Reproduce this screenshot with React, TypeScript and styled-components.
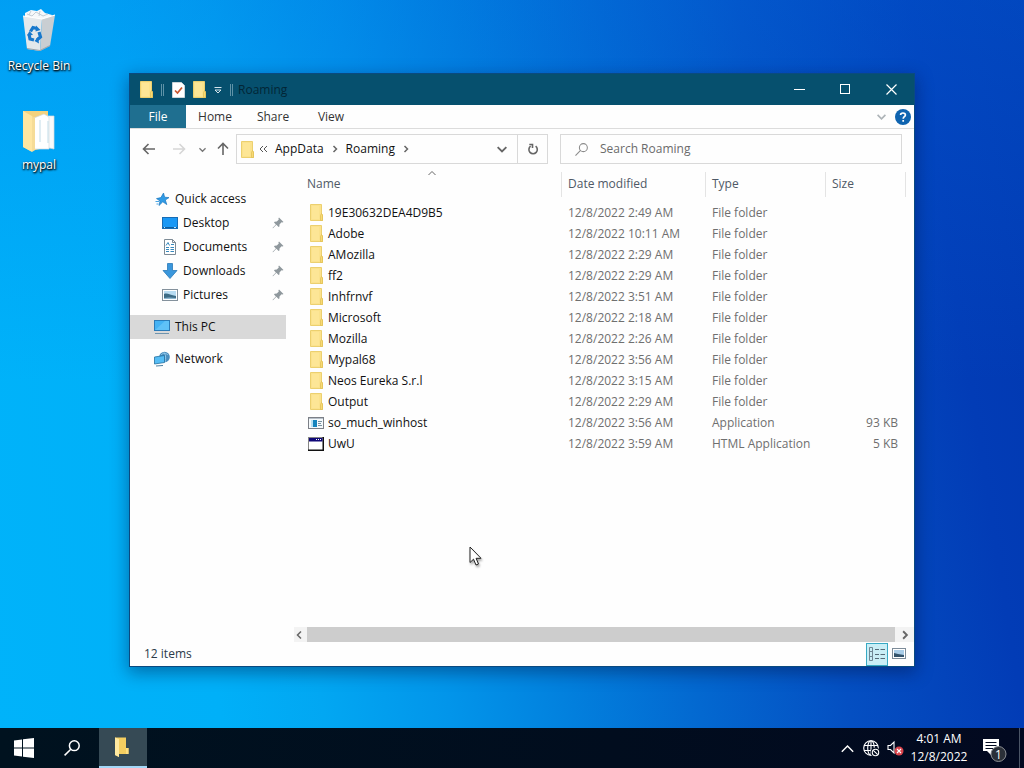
import React from "react";
import styled, { createGlobalStyle } from "styled-components";

const GlobalStyle = createGlobalStyle`
  * { box-sizing: border-box; }
  html, body, #root { height: 100%; }
  body {
    margin: 0;
    overflow: hidden;
    font-family: "Open Sans", "Noto Sans", sans-serif;
    font-size: 12px;
    line-height: 16px;
    color: #111;
  }
  button, input { font: inherit; color: inherit; }
  button { border: 0; padding: 0; background: none; }
  svg { display: block; flex: none; }
`;

const Screen = styled.div`
  display: flex;
  flex-direction: column;
  height: 100%;
  background:
    linear-gradient(180deg, rgba(0, 110, 230, 0.28), rgba(0, 110, 230, 0) 50%),
    linear-gradient(81deg, #00b3fa 0%, #00b0f8 20%, #02a7f2 29%, #0295ea 40%, #0281de 50%, #0368d0 62%, #044fc2 75%, #023cb6 90%, #0238b0 100%);
`;

const Desktop = styled.main`
  position: relative;
  flex: 1;
  min-height: 0;
  padding-top: 8px;
`;

const Shortcuts = styled.nav`
  display: flex;
  flex-direction: column;
  gap: 33px;
  width: 78px;
`;

const Shortcut = styled.a`
  display: flex;
  flex-direction: column;
  align-items: center;
  gap: 2px;
  color: #fff;
  text-decoration: none;
  text-shadow: 0 1px 2px #000, 1px 1px 2px #000;
`;

const Window = styled.section`
  position: absolute;
  inset: 74px 110px 62px 130px;
  display: flex;
  flex-direction: column;
  background: #fefefe;
  box-shadow: 0 0 0 1px #0a4a80, 0 5px 16px 2px rgba(0, 15, 60, 0.4);
`;

const TitleBar = styled.header`
  display: flex;
  align-items: center;
  height: 31px;
  padding-left: 10px;
  background: #06506e;
`;

const QuickTools = styled.div`
  display: flex;
  align-items: center;
  gap: 8px;
  flex: 1;
`;

const Divider = styled.span`
  width: 3px;
  height: 12px;
  border: solid #5f93a8;
  border-width: 0 1px;
`;

const Title = styled.h1`
  margin: 0 0 0 -3px;
  font-size: 12px;
  font-weight: 400;
  color: #022636;
`;

const Caption = styled.button`
  display: grid;
  place-items: center;
  width: 46px;
  height: 31px;
`;

const Ribbon = styled.nav`
  display: flex;
  align-items: stretch;
  height: 24px;
  padding-right: 3px;
  border-bottom: 1px solid #dcdcdc;
`;

const RibbonTab = styled.button<{ $file?: boolean }>`
  width: ${(p) => (p.$file ? 56 : 58)}px;
  color: ${(p) => (p.$file ? "#fff" : "#333")};
  background: ${(p) => (p.$file ? "#1f6f90" : "transparent")};
`;

const RibbonEnd = styled.div`
  display: flex;
  align-items: center;
  gap: 9px;
  margin-left: auto;
`;

const NavRow = styled.div`
  display: flex;
  align-items: center;
  height: 40px;
  padding: 0 12px;
`;

const NavButtons = styled.div`
  display: flex;
  align-items: center;
  gap: 16px;
  width: 94px;
`;

const RecentUp = styled.div`
  display: flex;
  align-items: center;
  gap: 10px;
  margin-left: -3px;
`;

const AddressBar = styled.div`
  display: flex;
  align-items: center;
  flex: 312 1 312px;
  min-width: 0;
  height: 30px;
  padding-left: 4px;
  border: 1px solid #d9d9d9;
`;

const CrumbMore = styled.button`
  margin-left: 5px;
`;

const Crumb = styled.button`
  padding: 0 7px;
  color: #111;
`;

const AddressEnd = styled.div`
  display: flex;
  margin-left: auto;
  height: 100%;
`;

const AddressButton = styled.button<{ $line?: boolean }>`
  display: grid;
  place-items: center;
  width: 30px;
  border-left: ${(p) => (p.$line ? "1px solid #d9d9d9" : "0")};
`;

const SearchBox = styled.label`
  display: flex;
  align-items: center;
  gap: 12px;
  flex: 342 1 342px;
  min-width: 0;
  height: 30px;
  margin-left: 12px;
  padding-left: 14px;
  border: 1px solid #d9d9d9;
`;

const SearchInput = styled.input`
  flex: 1;
  min-width: 0;
  padding: 0;
  border: 0;
  outline: 0;
  background: none;
  &::placeholder { color: #6b6b6b; opacity: 1; }
`;

const Body = styled.div`
  display: flex;
  flex: 1;
  min-height: 0;
`;

const Sidebar = styled.nav`
  display: flex;
  flex-direction: column;
  gap: 8px;
  width: 156px;
  margin-right: 8px;
  padding-top: 18px;
`;

const SideGroup = styled.div`
  display: flex;
  flex-direction: column;
`;

const SideItem = styled.a<{ $nested?: boolean; $active?: boolean }>`
  display: flex;
  align-items: center;
  gap: 5px;
  height: 24px;
  padding: 0 2px 0 ${(p) => (p.$nested ? 32 : 24)}px;
  color: #111;
  text-decoration: none;
  background: ${(p) => (p.$active ? "#d9d9d9" : "transparent")};
`;

const SideLabel = styled.span`
  flex: 1;
  white-space: nowrap;
`;

const FilePane = styled.div`
  display: flex;
  flex-direction: column;
  flex: 1;
  min-width: 0;
`;

const FileScroll = styled.div`
  flex: 1;
  min-height: 0;
  overflow: hidden;
`;

const FileTable = styled.table`
  width: 100%;
  table-layout: fixed;
  border-collapse: separate;
  border-spacing: 0;
`;

const Col = styled.col<{ $w?: number }>`
  width: ${(p) => (p.$w ? `${p.$w}px` : "auto")};
`;

const HeadCell = styled.th<{ $first?: boolean }>`
  position: relative;
  height: 33px;
  padding: 0 0 3px ${(p) => (p.$first ? 13 : 7)}px;
  font-weight: 400;
  text-align: left;
  color: #4f5966;
  background: ${(p) => (p.$first ? "none" : "linear-gradient(#e4e4e4, #e4e4e4) 0 3px / 1px 25px no-repeat")};
`;

const SortMark = styled.span`
  position: absolute;
  top: 0;
  left: 50%;
`;

const Cell = styled.td<{ $right?: boolean }>`
  height: 21px;
  padding: 0 ${(p) => (p.$right ? 7 : 0)}px 0 7px;
  white-space: nowrap;
  text-align: ${(p) => (p.$right ? "right" : "left")};
  color: #6f6f6f;
`;

const NameCell = styled(Cell)`
  padding-left: 14px;
  color: #111;
`;

const FileName = styled.span`
  display: flex;
  align-items: center;
  gap: 4px;
`;

const ScrollBar = styled.div`
  display: flex;
  height: 15px;
  background: #f3f3f3;
`;

const ScrollArrow = styled.button`
  display: grid;
  place-items: center;
  width: 19px;
  &:first-child { width: 13px; padding-right: 4px; }
`;

const ScrollThumb = styled.div`
  flex: 1;
  background: #cdcdcd;
`;

const StatusBar = styled.footer`
  display: flex;
  align-items: center;
  height: 24px;
  padding: 0 4px 0 14px;
  color: #2b3a4a;
`;

const ViewButtons = styled.div`
  display: flex;
  margin-left: auto;
`;

const ViewButton = styled.button<{ $on?: boolean }>`
  display: grid;
  place-items: center;
  width: 22px;
  height: 23px;
  border: 1px solid ${(p) => (p.$on ? "#38a9c4" : "transparent")};
  background: ${(p) => (p.$on ? "#c9eef6" : "transparent")};
`;

const Pointer = styled.div`
  position: absolute;
  left: 469px;
  top: 546px;
  filter: drop-shadow(1px 2px 1px rgba(0, 0, 0, 0.35));
`;

const Taskbar = styled.footer`
  display: flex;
  height: 40px;
  background: linear-gradient(90deg, #00121f, #010d1e 60%, #020920);
  color: #fff;
`;

const TaskButton = styled.button<{ $open?: boolean }>`
  display: grid;
  place-items: center;
  width: 48px;
  margin-left: ${(p) => (p.$open ? 3 : 0)}px;
  background: ${(p) => (p.$open ? "#364a55" : "transparent")};
  border-bottom: ${(p) => (p.$open ? "2px solid #a3d8f8" : "0")};
`;

const Tray = styled.div`
  display: flex;
  align-items: center;
  margin-left: auto;
`;

const TrayButton = styled.button<{ $wide?: boolean }>`
  display: grid;
  place-items: center;
  width: ${(p) => (p.$wide ? 48 : 24)}px;
  height: 40px;
`;

const Clock = styled.time`
  display: flex;
  flex-direction: column;
  align-items: center;
  width: 64px;
  line-height: 18px;
`;

const ShowDesktop = styled.button`
  width: 5px;
  height: 40px;
  border-left: 1px solid #4b5566;
`;

const Folder = () => (
  <svg width="13" height="17" viewBox="0 0 13 17" aria-hidden="true">
    <path d="M0.5 0.5H11.5V10L12.5 11V16.5H0.5Z" fill="#fbe28c" stroke="#ecd06f" />
    <path d="M2 2H9V15H2Z" fill="#ffe99f" opacity="0.55" />
    <path d="M10.500 16V11.5L11.5 9.5L12.5 11V16.5H10.500Z" fill="#f8da74" stroke="#e0be55" strokeWidth="0.7" />
  </svg>
);

const Chevron = ({ dir, size = 8, color = "#666", weight = 1.5 }: { dir: "up" | "down" | "left" | "right"; size?: number; color?: string; weight?: number }) => {
  const d = {
    up: "M0.5 6L4 2.5L7.5 6",
    down: "M0.5 2.5L4 6L7.5 2.5",
    left: "M6 0.5L2.5 4L6 7.5",
    right: "M2.5 1L5.5 4L2.5 7",
  }[dir];
  return (
    <svg width={size} height={size} viewBox="0 0 8 8" fill="none" stroke={color} strokeWidth={weight} aria-hidden="true">
      <path d={d} />
    </svg>
  );
};

const Arrow = ({ color, turn = 0 }: { color: string; turn?: number }) => (
  <svg width="14" height="14" viewBox="0 0 14 14" fill="none" stroke={color} strokeWidth="1.6" aria-hidden="true">
    <path d="M13 7H1.5M6.5 2L1.5 7L6.5 12" transform={`rotate(${turn} 7 7)`} />
  </svg>
);

const Magnifier = ({ size, color, weight }: { size: number; color: string; weight: number }) => (
  <svg width={size} height={size} viewBox="0 0 16 16" fill="none" stroke={color} strokeWidth={weight} aria-hidden="true">
    <circle cx="10.3" cy="5.7" r="4.9" />
    <path d="M6.8 9.2L0.6 15.4" />
  </svg>
);

const Pin = () => (
  <svg width="12" height="12" viewBox="0 0 12 12" fill="#8f989d" aria-hidden="true">
    <path d="M7 0.5L11.5 5L10.5 5.5L9.5 5.3L7.5 7.5L7.4 9.5L6.6 10L4.4 7.8L1 11.3L0.5 11L3.9 7.4L2 5.4L2.6 4.7L4.8 4.5L6.8 2.5L6.4 1.4Z" />
  </svg>
);

const Star = () => (
  <svg width="16" height="16" viewBox="0 0 16 16" aria-hidden="true">
    <path d="M9.5 2L10.6 6.200L15 6.600L11.3 9L12.800 13.6L8.8 10.8L5 14.5L6 9.9L2.500 7.6L6.9 6.600Z" fill="#2f9be6" stroke="#1b76bd" strokeWidth="0.7" />
    <path d="M1.500 10.5H5M2.500 13H4.5" stroke="#4ba6e4" />
  </svg>
);

const DesktopIcon = () => (
  <svg width="16" height="16" viewBox="0 0 16 16" aria-hidden="true">
    <rect x="0.5" y="2.5" width="15" height="11" fill="#1a98f5" stroke="#176cb5" />
    <path d="M1 12.5H15" stroke="#0d5e9e" />
    <path d="M2 12.5H3M12 12.5H14" stroke="#bfe3fb" />
  </svg>
);

const DocumentIcon = () => (
  <svg width="16" height="16" viewBox="0 0 16 16" aria-hidden="true">
    <path d="M2.5 0.5H10.5L13.5 3.5V15.5H2.5Z" fill="#fff" stroke="#7d8b96" />
    <path d="M10.5 0.5V3.5H13.5" fill="none" stroke="#7d8b96" />
    <path d="M4 6.5L6 3.5L7.5 6.5M9 5.5H12M4 8.5H7M8.5 8.5H12M4 10.5H7M8.5 10.5H12M4 12.5H7M8.5 12.5H12" fill="none" stroke="#3889bd" />
  </svg>
);

const DownloadIcon = () => (
  <svg width="16" height="16" viewBox="0 0 16 16" aria-hidden="true">
    <path d="M5.5 0.5H10.5V7.5H15L8 15.5L1 7.5H5.5Z" fill="#3a97dc" stroke="#2879b8" strokeWidth="0.8" />
  </svg>
);

const PictureIcon = () => (
  <svg width="16" height="16" viewBox="0 0 16 16" aria-hidden="true">
    <rect x="0.5" y="2.5" width="15" height="11" fill="#fff" stroke="#84919c" />
    <rect x="2" y="4" width="12" height="8" fill="#b8dcf2" />
    <path d="M2 7C5 5.500 8 8 14 9V12H2Z" fill="#3d6c86" />
    <path d="M2 11C6 10 10 10.500 14 11V12H2Z" fill="#8fb7d0" />
  </svg>
);

const PcIcon = () => (
  <svg width="16" height="16" viewBox="0 0 16 16" aria-hidden="true">
    <rect x="0.5" y="1.500" width="15" height="10" fill="#44b2f4" stroke="#2b7bb8" />
    <path d="M1 11L11 2H15V11Z" fill="#72cbfa" opacity="0.6" />
    <path d="M1 14.500H15" stroke="#6f94ae" />
  </svg>
);

const NetworkIcon = () => (
  <svg width="16" height="16" viewBox="0 0 16 16" aria-hidden="true">
    <circle cx="10.500" cy="6" r="5.300" fill="#4a8dbd" />
    <path d="M7 4C9 1.500 12 2 14 4M10 1.500C12 4 12 8 11 11" fill="none" stroke="#93c8ea" />
    <path d="M0.500 6L10.500 4.500V11.500L0.500 13Z" fill="#56bdf5" stroke="#23709f" strokeWidth="0.8" />
    <path d="M2 15L9 14.500" stroke="#4d7f9f" />
  </svg>
);

const AppIcon = () => (
  <svg width="16" height="16" viewBox="0 0 16 16" aria-hidden="true">
    <rect x="0.500" y="2.500" width="15" height="11" fill="#f5f9fb" stroke="#7c8087" />
    <path d="M1 3.500H15" stroke="#b7c0c9" />
    <rect x="5" y="5" width="4" height="7" fill="#1684bd" />
    <rect x="3" y="5" width="2" height="7" fill="#b8e1f3" />
    <path d="M10 6.500H14M10 8.500H13M10 10.500H14" stroke="#7891a0" />
  </svg>
);

const HtaIcon = () => (
  <svg width="16" height="16" viewBox="0 0 16 16" aria-hidden="true">
    <rect x="0.500" y="1.500" width="15" height="13" fill="#fff" stroke="#858585" />
    <path d="M0 14.250H15.250V1" fill="none" stroke="#111" strokeWidth="1.500" />
    <rect x="1" y="2" width="13.500" height="3.500" fill="#100878" />
    <path d="M8 3.500H9M10 3.500H11M12 3.500H13" stroke="#fff" />
  </svg>
);

const RecycleBin = () => (
  <svg width="48" height="48" viewBox="0 0 48 48" aria-hidden="true">
    <g transform="translate(-3 0)">
      <path d="M13 5L19 2L25 3L29 1L33 5L40 7L38 12H13Z" fill="#f6f8fa" />
      <path d="M15 6L20 8L24 4L31 8L36 6M19 3L17 7M28 3L27 8" fill="none" stroke="#c3ccd4" />
      <path d="M11 8L30 11L28 43L15 41Z" fill="#e4e8eb" />
      <path d="M30 11L43 7L38 38L28 43Z" fill="#c9ced2" />
      <path d="M11 8L30 11L43 7" fill="none" stroke="#fff" strokeWidth="1.200" />
      <path d="M15 40.500L28 42.500L38 37.500" fill="none" stroke="#9ba2a8" />
      <g fill="none" stroke="#1878cc" strokeWidth="3.200">
        <path d="M18.500 23.500L21 19.500L25 20.500" />
        <path d="M17 26L18 31L22 32" />
        <path d="M27 24L28.500 29L25 32" />
      </g>
      <path d="M24 17.500L28.500 22L23.500 23.500Z" fill="#1878cc" />
      <path d="M15 27.500L17.500 23L21 27Z" fill="#1878cc" />
      <path d="M26 29L22.500 33L27 35.500Z" fill="#1878cc" />
    </g>
  </svg>
);

const OpenFolder = () => (
  <svg width="48" height="48" viewBox="0 0 48 48" aria-hidden="true">
    <path d="M8 4L33 4V40L16 44L8 40Z" fill="#f3d27e" />
    <path d="M30 9H39V42L30 40Z" fill="#f8fafb" stroke="#d5dade" strokeWidth="0.700" />
    <path d="M19 11L29 7L34 10V42L19 42Z" fill="#fff" stroke="#d5dade" strokeWidth="0.700" />
    <path d="M25 13V35M33 14V36" stroke="#c2dce8" />
    <path d="M8 4L17 9V45L8 40Z" fill="#ffe6a1" />
    <path d="M17 9L20 11V43L17 45Z" fill="#f6dc97" />
  </svg>
);

const PropertiesIcon = () => (
  <svg width="13" height="16" viewBox="0 0 13 16" aria-hidden="true">
    <path d="M0.500 0.500H9.500L12.500 3.500V15.500H0.500Z" fill="#fff" stroke="#cbd5da" />
    <path d="M3 8.500L5.500 11L10 5.500" fill="none" stroke="#c9552f" strokeWidth="1.700" />
  </svg>
);

type Entry = { name: string; date: string; type: string; size?: string; icon: React.ReactNode };

const folder = (name: string, time: string): Entry => ({
  name,
  date: `12/8/2022 ${time}`,
  type: "File folder",
  icon: <Folder />,
});

const entries: Entry[] = [
  folder("19E30632DEA4D9B5", "2:49 AM"),
  folder("Adobe", "10:11 AM"),
  folder("AMozilla", "2:29 AM"),
  folder("ff2", "2:29 AM"),
  folder("Inhfrnvf", "3:51 AM"),
  folder("Microsoft", "2:18 AM"),
  folder("Mozilla", "2:26 AM"),
  folder("Mypal68", "3:56 AM"),
  folder("Neos Eureka S.r.l", "3:15 AM"),
  folder("Output", "2:29 AM"),
  { name: "so_much_winhost", date: "12/8/2022 3:56 AM", type: "Application", size: "93 KB", icon: <AppIcon /> },
  { name: "UwU", date: "12/8/2022 3:59 AM", type: "HTML Application", size: "5 KB", icon: <HtaIcon /> },
];

const IconSlot = styled.span`
  display: grid;
  place-items: center;
  width: 16px;
`;

const pinned = [
  { label: "Desktop", icon: <DesktopIcon /> },
  { label: "Documents", icon: <DocumentIcon /> },
  { label: "Downloads", icon: <DownloadIcon /> },
  { label: "Pictures", icon: <PictureIcon /> },
];

function Explorer() {
  return (
    <Window aria-label="Roaming">
      <TitleBar>
        <QuickTools>
          <Folder />
          <Divider />
          <PropertiesIcon />
          <Folder />
          <svg width="8" height="8" viewBox="0 0 8 8" fill="none" stroke="#d5e5ec" aria-hidden="true">
            <path d="M0.500 1.500H7.500M1 4L4 7L7 4Z" />
          </svg>
          <Divider />
          <Title>Roaming</Title>
        </QuickTools>
        <Caption aria-label="Minimize">
          <svg width="11" height="11" viewBox="0 0 11 11" stroke="#fff"><path d="M0 5.500H11" /></svg>
        </Caption>
        <Caption aria-label="Maximize">
          <svg width="11" height="11" viewBox="0 0 11 11" stroke="#fff" fill="none"><rect x="0.500" y="0.500" width="9" height="9" /></svg>
        </Caption>
        <Caption aria-label="Close">
          <svg width="11" height="11" viewBox="0 0 11 11" stroke="#fff" strokeWidth="1.200"><path d="M0.500 0.500L10.500 10.500M10.500 0.500L0.500 10.500" /></svg>
        </Caption>
      </TitleBar>

      <Ribbon>
        <RibbonTab $file>File</RibbonTab>
        <RibbonTab>Home</RibbonTab>
        <RibbonTab>Share</RibbonTab>
        <RibbonTab>View</RibbonTab>
        <RibbonEnd>
          <button aria-label="Expand the ribbon"><Chevron dir="down" size={9} color="#aeb4b8" /></button>
          <button aria-label="Help">
            <svg width="16" height="16" viewBox="0 0 16 16" fill="none">
              <circle cx="8" cy="8" r="8" fill="#0f64b0" />
              <path d="M5.600 6C5.600 3.400 10.400 3.300 10.400 6C10.400 7.700 8.200 7.800 8.200 9.800M8.200 11V12.800" stroke="#fff" strokeWidth="1.700" />
            </svg>
          </button>
        </RibbonEnd>
      </Ribbon>

      <NavRow>
        <NavButtons>
          <button aria-label="Back"><Arrow color="#666" /></button>
          <button aria-label="Forward"><Arrow color="#d6d6d6" turn={180} /></button>
          <RecentUp>
            <button aria-label="Recent locations"><Chevron dir="down" size={7} color="#777" /></button>
            <button aria-label="Up"><Arrow color="#666" turn={90} /></button>
          </RecentUp>
        </NavButtons>
        <AddressBar>
          <Folder />
          <CrumbMore aria-label="Parent folders">
            <svg width="9" height="8" viewBox="0 0 9 8" fill="none" stroke="#555">
              <path d="M4 1L1 4L4 7M8 1L5 4L8 7" />
            </svg>
          </CrumbMore>
          <Crumb>AppData</Crumb>
          <Chevron dir="right" />
          <Crumb>Roaming</Crumb>
          <Chevron dir="right" />
          <AddressEnd>
            <AddressButton aria-label="Previous locations"><Chevron dir="down" size={10} /></AddressButton>
            <AddressButton $line aria-label="Refresh">
              <svg width="12" height="12" viewBox="0 0 12 12" fill="none" stroke="#666" strokeWidth="1.600">
                <path d="M8.600 3.200A4.200 4.200 0 1 1 3.600 3.200" />
                <path d="M2.300 1.500H5.500V5" />
              </svg>
            </AddressButton>
          </AddressEnd>
        </AddressBar>
        <SearchBox>
          <Magnifier size={13} color="#8b8b8b" weight={1.3} />
          <SearchInput type="text" placeholder="Search Roaming" aria-label="Search Roaming" />
        </SearchBox>
      </NavRow>

      <Body>
        <Sidebar>
          <SideGroup>
            <SideItem href="#quick"><Star /><SideLabel>Quick access</SideLabel></SideItem>
            {pinned.map((p) => (
              <SideItem key={p.label} href={`#${p.label}`} $nested>
                {p.icon}
                <SideLabel>{p.label}</SideLabel>
                <Pin />
              </SideItem>
            ))}
          </SideGroup>
          <SideItem href="#pc" $active><PcIcon /><SideLabel>This PC</SideLabel></SideItem>
          <SideItem href="#network"><NetworkIcon /><SideLabel>Network</SideLabel></SideItem>
        </Sidebar>
        <FilePane>
          <FileScroll>
            <FileTable>
              <colgroup>
                <Col /><Col $w={144} /><Col $w={120} /><Col $w={80} /><Col $w={9} />
              </colgroup>
              <thead>
                <tr>
                  <HeadCell $first>Name<SortMark><Chevron dir="up" weight={1} /></SortMark></HeadCell>
                  <HeadCell>Date modified</HeadCell>
                  <HeadCell>Type</HeadCell>
                  <HeadCell>Size</HeadCell>
                  <HeadCell aria-hidden="true" />
                </tr>
              </thead>
              <tbody>
                {entries.map((e) => (
                  <tr key={e.name}>
                    <NameCell><FileName><IconSlot>{e.icon}</IconSlot>{e.name}</FileName></NameCell>
                    <Cell>{e.date}</Cell>
                    <Cell>{e.type}</Cell>
                    <Cell $right>{e.size}</Cell>
                    <Cell />
                  </tr>
                ))}
              </tbody>
            </FileTable>
          </FileScroll>
          <ScrollBar>
            <ScrollArrow aria-label="Scroll left"><Chevron dir="left" /></ScrollArrow>
            <ScrollThumb />
            <ScrollArrow aria-label="Scroll right"><Chevron dir="right" size={10} /></ScrollArrow>
          </ScrollBar>
        </FilePane>
      </Body>

      <StatusBar>
        <span>12 items</span>
        <ViewButtons>
          <ViewButton $on aria-label="Details view">
            <svg width="16" height="14" viewBox="0 0 16 14" fill="none" stroke="#566b78">
              <path d="M0.500 0.500H3.500V13.500H0.500ZM0.500 4.500H3.500M0.500 9.500H3.500" stroke="#6f8794" />
              <path d="M6 2.500H10M11.500 2.500H16M6 7.500H10M11.500 7.500H16M6 11.500H10M11.500 11.500H16" />
            </svg>
          </ViewButton>
          <ViewButton aria-label="Large icons view">
            <svg width="14" height="12" viewBox="0 0 14 12">
              <rect x="0.500" y="0.500" width="13" height="10" fill="#fff" stroke="#7d8c99" />
              <rect x="2" y="2" width="10" height="7" fill="#a9cde8" />
              <path d="M2 5L6 6L12 7V9H2Z" fill="#34536b" />
            </svg>
          </ViewButton>
        </ViewButtons>
      </StatusBar>
    </Window>
  );
}

export default function App() {
  return (
    <Screen>
      <GlobalStyle />
      <Desktop>
        <Shortcuts>
          <Shortcut href="#bin"><RecycleBin />Recycle Bin</Shortcut>
          <Shortcut href="#mypal"><OpenFolder />mypal</Shortcut>
        </Shortcuts>
        <Explorer />
        <Pointer>
          <svg width="14" height="21" viewBox="0 0 14 21" aria-hidden="true">
            <path d="M1 1V16.500L4.500 13.200L7 19L9.500 18L7.100 12.300H12Z" fill="#fff" stroke="#222" />
          </svg>
        </Pointer>
      </Desktop>
      <Taskbar>
        <TaskButton aria-label="Start">
          <svg width="20" height="20" viewBox="0 0 20 20" fill="#fff">
            <path d="M0 2.600L8 1.500V9.500H0ZM9 1.300L20 0V9.500H9ZM0 10.500H8V18.500L0 17.400ZM9 10.500H20V20L9 18.700Z" />
          </svg>
        </TaskButton>
        <TaskButton aria-label="Search"><Magnifier size={16} color="#fff" weight={1.5} /></TaskButton>
        <TaskButton $open aria-label="File Explorer">
          <svg width="16" height="20" viewBox="0 0 16 20">
            <path d="M0 0.500H11V11H13.500V17H4V20L0 18Z" fill="#f4ce60" />
            <path d="M0 0.500L4 2V20L0 18Z" fill="#ffe9a0" />
            <path d="M11 11H13.500V17H11Z" fill="#ffdf80" />
          </svg>
        </TaskButton>
        <Tray>
          <TrayButton aria-label="Show hidden icons"><Chevron dir="up" size={13} color="#fff" weight={0.9} /></TrayButton>
          <TrayButton aria-label="Network">
            <svg width="17" height="17" viewBox="0 0 17 17" fill="none" stroke="#fff" strokeWidth="1.100">
              <circle cx="8" cy="8" r="7.300" />
              <ellipse cx="8" cy="8" rx="3.300" ry="7.300" />
              <path d="M1 5.500H15M1 10.500H15M8 1V15" />
              <circle cx="12.500" cy="12.500" r="4.400" fill="#010c1e" stroke="#010c1e" />
              <circle cx="12.500" cy="12.500" r="3.200" />
              <path d="M10.300 10.300L14.700 14.700" />
            </svg>
          </TrayButton>
          <TrayButton aria-label="Volume">
            <svg width="17" height="16" viewBox="0 0 17 16" fill="none">
              <path d="M1 5.500H3.500L7 2V13L3.500 9.500H1Z" stroke="#fff" strokeWidth="1.100" />
              <circle cx="12" cy="11" r="4.500" fill="#d9434b" />
              <path d="M10 9L14 13M14 9L10 13" stroke="#fff" strokeWidth="1.100" />
            </svg>
          </TrayButton>
          <Clock><span>4:01 AM</span><span>12/8/2022</span></Clock>
          <TrayButton $wide aria-label="Notifications">
            <svg width="28" height="28" viewBox="0 0 28 28">
              <path d="M2 5H18V17H10V21L6 17H2Z" fill="#fff" />
              <path d="M4.500 8.500H15.500M4.500 11.500H15.500M4.500 14.500H12" stroke="#020a20" />
              <circle cx="17.500" cy="20" r="7.500" fill="#2b3038" stroke="#8c8f94" />
              <text x="17.500" y="24.500" fill="#fff" fontSize="12" textAnchor="middle">1</text>
            </svg>
          </TrayButton>
          <ShowDesktop aria-label="Show desktop" />
        </Tray>
      </Taskbar>
    </Screen>
  );
}
